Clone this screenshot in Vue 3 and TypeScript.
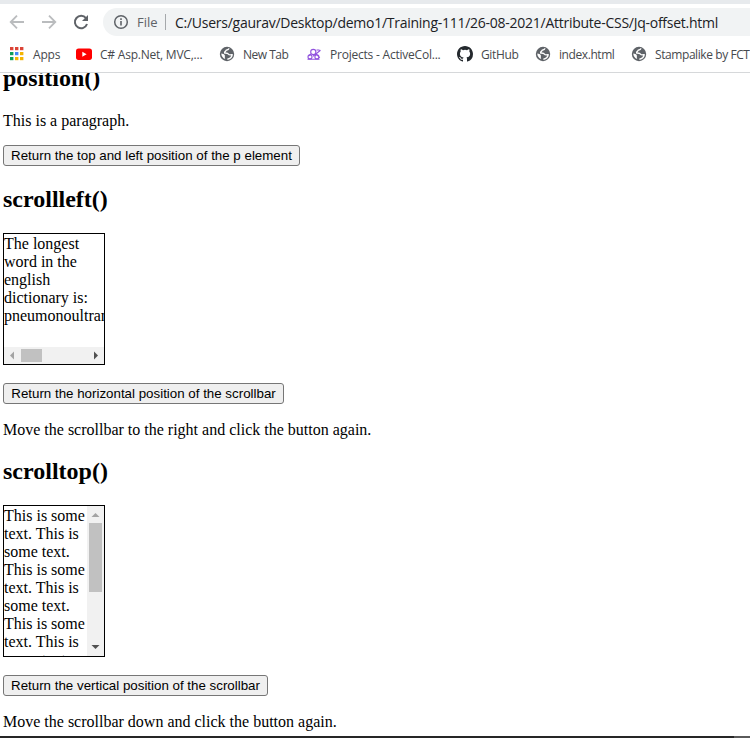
<script setup lang="ts">
interface Bookmark {
  label: string
  icon: 'apps' | 'youtube' | 'globe' | 'active' | 'github'
  slot: number
  spacing: number
}

const bookmarks: Bookmark[] = [
  { label: 'Apps', icon: 'apps', slot: 67, spacing: -0.2 },
  { label: 'C# Asp.Net, MVC,...', icon: 'youtube', slot: 143, spacing: -0.22 },
  { label: 'New Tab', icon: 'globe', slot: 87, spacing: -0.5 },
  { label: 'Projects - ActiveCol...', icon: 'active', slot: 151, spacing: -0.22 },
  { label: 'GitHub', icon: 'github', slot: 78, spacing: -0.35 },
  { label: 'index.html', icon: 'globe', slot: 96, spacing: -0.42 },
  { label: 'Stampalike by FCT', icon: 'globe', slot: 150, spacing: -0.42 },
]

const appColors = ['#db4437', '#db4437', '#db4437', '#0f9d58', '#4285f4', '#f4b400', '#0f9d58', '#f4b400', '#f4b400']
</script>

<template>
  <div class="window">
    <header class="chrome">
      <div class="toolbar">
        <svg class="nav" viewBox="0 0 16 16"><path d="M15 8H2M8 1.7 1.7 8 8 14.3" fill="none" stroke="#babcbe" stroke-width="1.8" /></svg>
        <svg class="nav" viewBox="0 0 16 16"><path d="M1 8h13M8 1.7 14.3 8 8 14.3" fill="none" stroke="#babcbe" stroke-width="1.8" /></svg>
        <svg class="nav" viewBox="0 0 16 16"><path d="M13 4.2A6.2 6.2 0 1 0 14 10" fill="none" stroke="#5f6368" stroke-width="2" /><path d="M15 1v6H9z" fill="#5f6368" /></svg>
        <div class="omnibox">
          <svg class="info" viewBox="0 0 16 16"><circle cx="8" cy="8" r="6.3" fill="none" stroke="#5f6368" stroke-width="1.5" /><path d="M8 7v4.5M8 4.3v1.6" stroke="#5f6368" stroke-width="1.6" /></svg>
          <span class="scheme">File</span>
          <span class="divider"></span>
          <span class="url">C:/Users/gaurav/Desktop/demo1/Training-111/26-08-2021/Attribute-CSS/Jq-offset.html</span>
        </div>
      </div>
      <nav class="bookmarks">
        <a v-for="b in bookmarks" :key="b.label" class="bookmark" :style="{ width: b.slot + 'px' }">
          <svg v-if="b.icon === 'apps'" class="icon" viewBox="0 0 16 16">
            <rect v-for="(c, i) in appColors" :key="i" :x="1 + (i % 3) * 5" :y="1 + Math.floor(i / 3) * 5" width="3.4" height="3.2" :fill="c" />
          </svg>
          <svg v-else-if="b.icon === 'youtube'" class="icon" viewBox="0 0 16 16">
            <rect y="2.5" width="16" height="11.4" rx="2.6" fill="#f00" /><path d="M6.3 5.7v5l4.3-2.5z" fill="#fff" />
          </svg>
          <svg v-else-if="b.icon === 'globe'" class="icon" viewBox="0 0 16 16">
            <circle cx="8" cy="8" r="7.2" fill="#5f6368" />
            <path d="M10 2.300C9.700 3.800 8.500 4 7.200 4.200 6.900 5.600 5.400 5.300 5.600 7c1.700 0 3.400-.1 4 1.200.5 1.100 1.800.8 3.600.5-.4 2.400-2.100 4.100-4.800 4.600" fill="none" stroke="#fff" stroke-width="1.400" stroke-linejoin="round" />
            <path d="M2.300 7.600c1.400.3 3 .6 3.500 1.700.3.800-.3 1.700.4 3.800C3.800 12.300 2.200 10 2.300 7.600z" fill="#fff" />
          </svg>
          <svg v-else-if="b.icon === 'active'" class="icon" viewBox="0 0 16 16" fill="none" stroke="#9254de" stroke-width="1.1">
            <circle cx="7.300" cy="6" r="2.600" /><circle cx="4" cy="10.900" r="2" /><circle cx="10.900" cy="10.900" r="2" />
            <path d="M1.500 13.200h12M5 8l-2.500 2M7 10.200l7.500-6M9.500 7.200 13.800 12M10.500 4h3" />
          </svg>
          <svg v-else class="icon" viewBox="0 0 16 16">
            <path fill="#24292e" d="M8 0C3.58 0 0 3.58 0 8c0 3.54 2.29 6.53 5.47 7.590.4.07.55-.17.55-.38 0-.19-.01-.82-.01-1.490-2.010.37-2.530-.49-2.690-.94-.09-.23-.48-.94-.82-1.130-.28-.15-.68-.52-.01-.53.63-.01 1.080.58 1.230.82.72 1.210 1.870.87 2.330.66.07-.52.28-.87.51-1.070-1.780-.2-3.640-.89-3.640-3.950 0-.87.31-1.590.82-2.150-.08-.2-.36-1.020.08-2.120 0 0 .67-.21 2.200.82a7.600 7.600 0 0 1 4 0c1.530-1.040 2.200-.82 2.200-.82.44 1.100.16 1.920.08 2.120.51.56.82 1.270.82 2.150 0 3.070-1.870 3.750-3.650 3.950.29.25.54.73.54 1.480 0 1.070-.01 1.930-.01 2.200 0 .21.15.46.55.38A8.010 8.010 0 0 0 16 8c0-4.420-3.580-8-8-8" />
          </svg>
          <span :style="{ letterSpacing: b.spacing + 'px' }">{{ b.label }}</span>
        </a>
      </nav>
    </header>

    <main class="page">
      <h2>position()</h2>
      <p>This is a paragraph.</p>
      <button class="b1">Return the top and left position of the p element</button>
      <h2>scrollleft()</h2>
      <div class="hbox">
        <div class="htext">The longest word in the english dictionary is: pneumonoultramicroscopicsilicovolcanoconiosis.</div>
        <div class="hbar">
          <svg viewBox="0 0 17 17"><path d="M10 4.500v8L6 8.500z" fill="#a3a3a3" /></svg>
          <i class="hthumb"></i>
          <svg viewBox="0 0 17 17"><path d="M7 4.500v8L11 8.500z" fill="#505050" /></svg>
        </div>
      </div>
      <button class="b2">Return the horizontal position of the scrollbar</button>
      <p>Move the scrollbar to the right and click the button again.</p>
      <h2>scrolltop()</h2>
      <div class="vbox">
        <div class="vtext">This is some text. This is some text. This is some text. This is some text. This is some text. This is some text.</div>
        <div class="vbar">
          <svg viewBox="0 0 17 17"><path d="M4.500 11h8L8.500 7z" fill="#a3a3a3" /></svg>
          <i class="vthumb"></i>
          <svg viewBox="0 0 17 17"><path d="M4.500 6h8L8.500 10z" fill="#505050" /></svg>
        </div>
      </div>
      <button class="b3">Return the vertical position of the scrollbar</button>
      <p>Move the scrollbar down and click the button again.</p>
    </main>
    <footer class="edge"><i></i></footer>
  </div>
</template>

<style>
body {
  margin: 0;
  background: #fff;
}
</style>

<style scoped>
.window {
  width: 750px;
  height: 738px;
  overflow: hidden;
  display: flex;
  flex-direction: column;
  background: #fff;
}
.chrome {
  flex: none;
  box-sizing: border-box;
  height: 73px;
  border-top: 4px solid #e7eaed;
  border-bottom: 1px solid #d6d8da;
  font-family: "Open Sans", "Noto Sans", sans-serif;
  white-space: nowrap;
}
.toolbar {
  display: flex;
  align-items: center;
  height: 36px;
  padding-left: 9px;
}
.nav {
  width: 16px;
  height: 16px;
  margin-right: 16px;
  flex: none;
}
.omnibox {
  display: flex;
  align-items: center;
  box-sizing: border-box;
  width: 680px;
  height: 28px;
  flex: none;
  margin-left: -2px;
  padding-left: 10px;
  border-radius: 14px 0 0 14px;
  background: #f1f3f4;
}
.info {
  width: 16px;
  height: 16px;
}
.scheme {
  width: 28px;
  margin-left: 8px;
  color: #5f6368;
  font-size: 13px;
}
.divider {
  width: 1px;
  height: 16px;
  background: #a5a8ab;
}
.url {
  margin-left: 9px;
  color: #202124;
  font-size: 14px;
  letter-spacing: -0.26px;
}
.bookmarks {
  display: flex;
  align-items: center;
  height: 28px;
  padding-left: 9px;
}
.bookmark {
  display: flex;
  align-items: center;
  flex: none;
  gap: 8px;
  color: #46494d;
  font-size: 12px;
}
.icon {
  flex: none;
  width: 16px;
  height: 16px;
}
.page {
  flex: 1;
  min-height: 0;
  overflow: hidden;
  padding-left: 3px;
  color: #000;
  font: 16px/18px "Liberation Serif", serif;
}
h2 {
  margin: 20px 0;
  font-size: 24px;
  line-height: 27px;
}
h2:first-child {
  margin: -8px 0 19px;
}
p {
  height: 17px;
  margin: 16px 0;
  padding-top: 1px;
}
button {
  display: block;
  box-sizing: border-box;
  height: 21px;
  padding: 0;
  border: 1px solid #767676;
  border-radius: 3px;
  background: #efefef;
  color: #000;
  font: 13.333px/17px "Liberation Sans", sans-serif;
  text-align: center;
  white-space: nowrap;
}
.b1 {
  width: 297px;
}
.b2 {
  width: 281px;
}
.b3 {
  width: 265px;
}
.hbox,
.vbox {
  display: flex;
  width: 100px;
  margin-bottom: 18px;
  border: 1px solid #000;
}
.hbox {
  flex-direction: column;
  height: 130px;
}
.htext {
  flex: 1;
  min-height: 0;
  padding-top: 1px;
  overflow: hidden;
}
.hbar {
  display: flex;
  align-items: center;
  height: 17px;
  background: #f1f1f1;
}
.hbar svg,
.vbar svg {
  width: 17px;
  height: 17px;
  flex: none;
}
.hthumb {
  width: 21px;
  height: 13px;
  margin-right: auto;
  background: #c1c1c1;
}
.vbox {
  height: 150px;
}
.vtext {
  width: 83px;
  padding-top: 1px;
  overflow: hidden;
}
.vbar {
  display: flex;
  flex-direction: column;
  align-items: center;
  width: 17px;
  background: #f1f1f1;
}
.vthumb {
  width: 13px;
  height: 69px;
  margin-bottom: auto;
  background: #c1c1c1;
}
.edge {
  display: flex;
  justify-content: flex-end;
  flex: none;
  height: 2px;
  background: #262626;
}
.edge i {
  width: 16px;
  background: #5a5a5a;
}
</style>
